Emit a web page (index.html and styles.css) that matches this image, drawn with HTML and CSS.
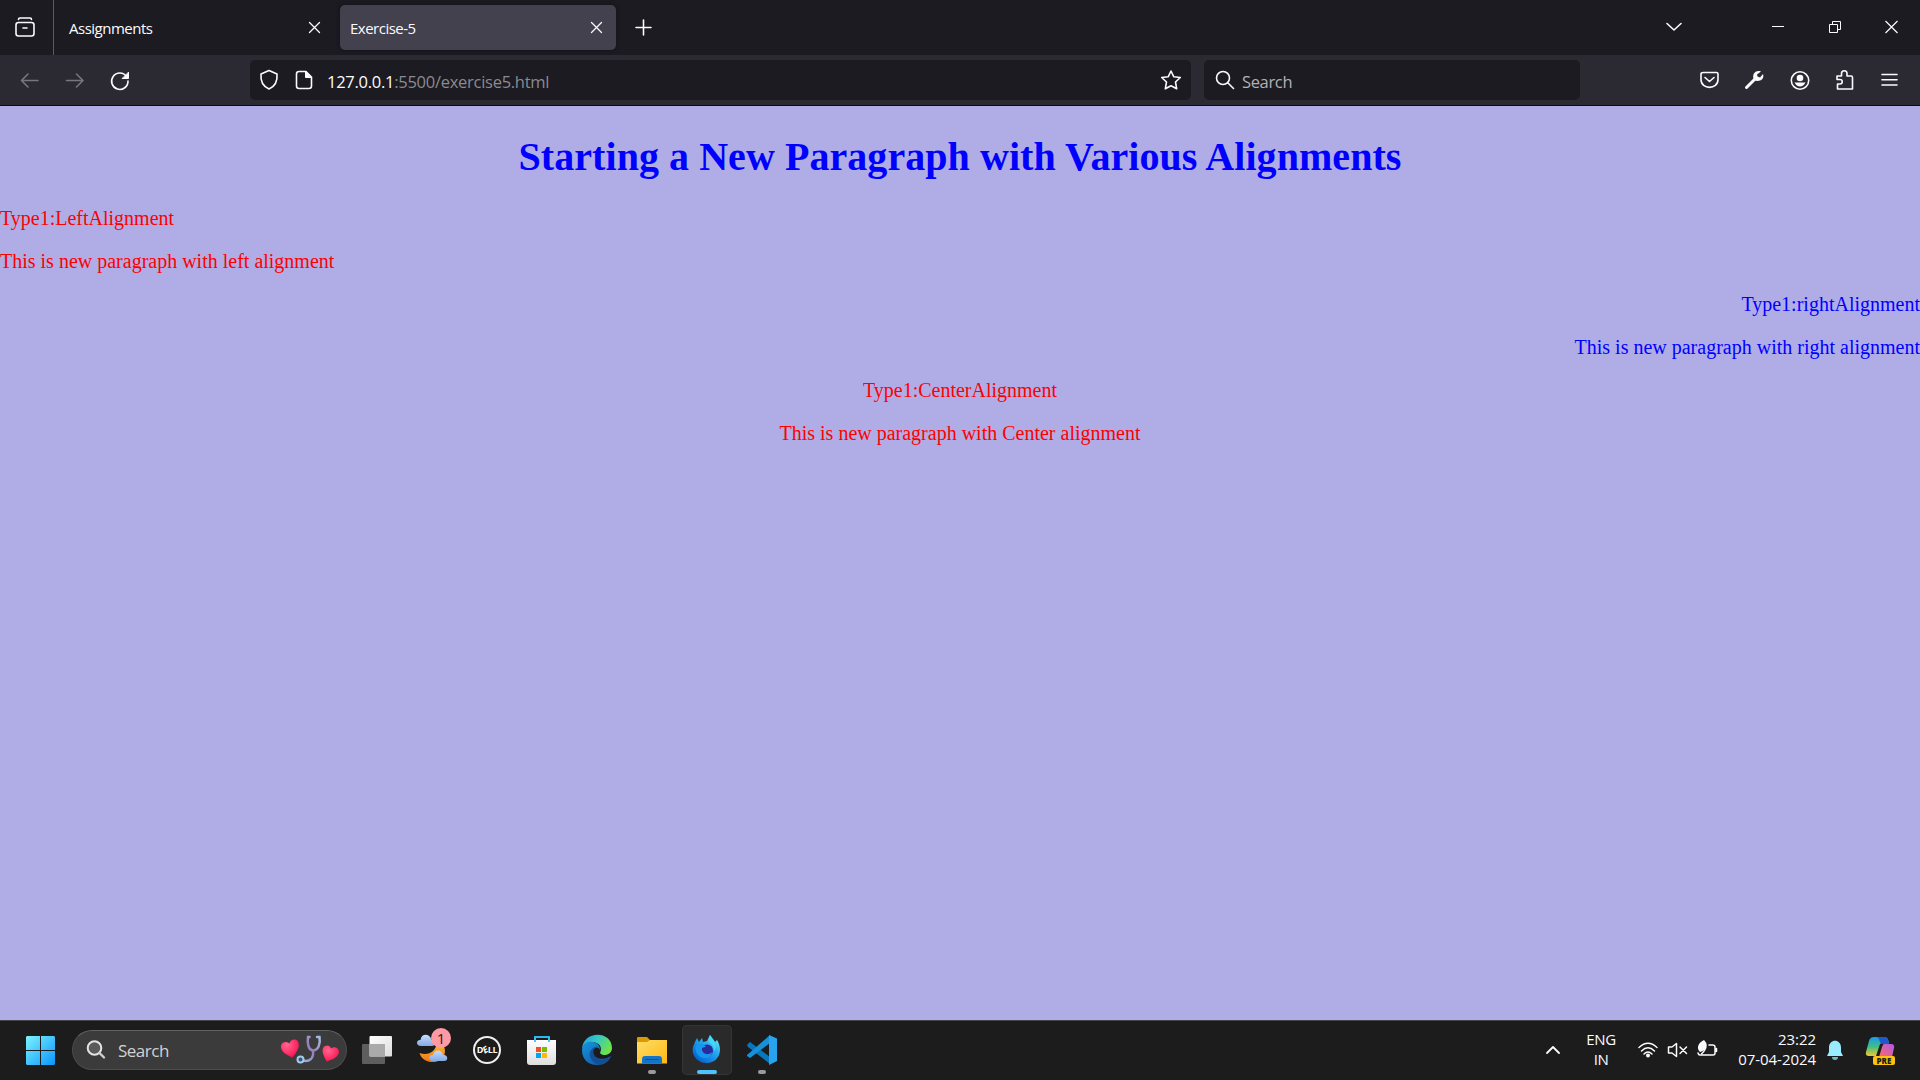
FILE: index.html
```html
<!DOCTYPE html>
<html lang="en">
<head>
<meta charset="utf-8">
<title>Exercise-5</title>
<link rel="stylesheet" href="styles.css">
</head>
<body>
<header class="tabbar">
  <div class="view-button">
    <svg width="24" height="24" viewBox="0 0 24 24" class="line"><path d="M5.500 3.500Q5.500 2 7 2H17Q18.500 2 18.500 3.500"/><rect x="3" y="6.500" width="18" height="13.500" rx="2.500"/><path d="M10 12H14"/></svg>
  </div>
  <div class="tab"><span class="tab-title">Assignments</span><svg class="line thin" width="13" height="13" viewBox="0 0 13 13"><path d="M1.500 1.500L11.500 11.500M11.500 1.500L1.500 11.500"/></svg></div>
  <div class="tab active"><span class="tab-title">Exercise-5</span><svg class="line thin" width="13" height="13" viewBox="0 0 13 13"><path d="M1.500 1.500L11.500 11.500M11.500 1.500L1.500 11.500"/></svg></div>
  <svg class="line new-tab" width="17" height="17" viewBox="0 0 17 17"><path d="M8.500 1V16M1 8.500H16"/></svg>
  <div class="window-controls">
    <svg class="line" width="56" height="55" viewBox="0 0 56 55"><path d="M21 23.500L28 30L35 23.500"/></svg>
    <svg class="line hair" width="57" height="55" viewBox="0 0 57 55"><path d="M23 26.500H35"/></svg>
    <svg class="line hair" width="57" height="55" viewBox="0 0 57 55"><path d="M23.500 24.500H31.500V32.500H23.500ZM26.500 24.500V21.500H34.500V29.500H31.500"/></svg>
    <svg class="line hair" width="57" height="55" viewBox="0 0 57 55"><path d="M22.500 21L34.500 33M34.500 21L22.500 33" stroke-width="1.200"/></svg>
  </div>
</header>
<nav class="toolbar">
  <svg class="line dim" width="45" height="40" viewBox="0 0 45 40"><path d="M38 20.500H21.500M28 14L21.500 20.500L28 27"/></svg>
  <svg class="line dim" width="45" height="40" viewBox="0 0 45 40"><path d="M21.500 20.500H38M31.500 14L38 20.500L31.500 27"/></svg>
  <svg class="line" width="45" height="40" viewBox="0 0 45 40"><path d="M36.500 16.500A8.200 8.200 0 1 0 38 21"/><path class="solid" d="M38.500 12.500V18.500H32.500Z"/></svg>
  <div class="field url">
    <svg class="line" width="38" height="40" viewBox="0 0 38 40"><path d="M19 10.500L27 14Q28 25 19 29Q10 25 11 14Z"/></svg>
    <svg class="line" width="34" height="40" viewBox="0 0 34 40"><path d="M11 11.500H18L23.500 17V26Q23.500 28.500 21 28.500H11Q8.500 28.500 8.500 26V14Q8.500 11.500 11 11.500Z"/><path class="solid" d="M17.500 11.500V17.500H23Z"/></svg>
    <span class="address">127.0.0.1<span class="path">:5500/exercise5.html</span></span>
    <svg class="line star" width="40" height="40" viewBox="0 0 40 40"><path d="M20 11L22.700 16.700L29.300 17.500L24.500 22L25.700 28.800L20 25.700L14.300 28.800L15.500 22L10.700 17.500L17.300 16.700Z"/></svg>
  </div>
  <div class="field search">
    <svg class="line" width="38" height="40" viewBox="0 0 38 40"><circle cx="19" cy="18" r="6.500"/><path d="M24 23L29.500 28.500"/></svg>
    <span class="placeholder">Search</span>
  </div>
  <div class="actions">
    <svg class="line" width="45" height="40" viewBox="0 0 45 40"><path d="M16.500 12.500H29.500Q31 12.500 31 14V19.500C31 30 14 30 14 19.500V14Q14 12.500 16.500 12.500ZM18 17.500L22.500 21.500L27 17.500"/></svg>
    <svg class="line" width="45" height="40" viewBox="0 0 45 40"><path d="M14.500 27.500L23.500 18.500" stroke-width="3"/><path class="fill" d="M29 11.500C23 9.500 19.500 15 22 20C26 22.500 33 20 31 14L28 17.500L25.500 16.500L25 14.500Z"/></svg>
    <svg class="line" width="45" height="40" viewBox="0 0 45 40"><circle cx="23" cy="20.500" r="8.700"/><circle class="fill" cx="23" cy="18" r="3.300"/><path class="fill" d="M17.500 22.500H28.500Q26.500 26.500 23 26.500T17.500 22.500Z"/></svg>
    <svg class="line" width="45" height="40" viewBox="0 0 45 40"><path d="M15 16H19.500V13.500A2.500 2.500 0 0 1 25 13.500V16H29Q30.500 16 30.500 17.500V29H15.500V24H18A2.200 2.200 0 0 0 18 19.500H15V17Z"/></svg>
    <svg class="line" width="45" height="40" viewBox="0 0 45 40"><path d="M15 14.500H30M15 19.700H30M15 25H30"/></svg>
  </div>
</nav>
<main class="page">
  <h1>Starting a New Paragraph with Various Alignments</h1>
  <p class="left">Type1:LeftAlignment</p>
  <p class="left">This is new paragraph with left alignment</p>
  <p class="right">Type1:rightAlignment</p>
  <p class="right">This is new paragraph with right alignment</p>
  <p class="center">Type1:CenterAlignment</p>
  <p class="center">This is new paragraph with Center alignment</p>
</main>
<footer class="taskbar">
  <svg class="start" width="29" height="29" viewBox="0 0 29 29"><defs><linearGradient id="win" x1="0" y1="0" x2="29" y2="29" gradientUnits="userSpaceOnUse"><stop offset="0" stop-color="#7df3ff"/><stop offset="1" stop-color="#0895fb"/></linearGradient></defs><path fill="url(#win)" d="M1 0H14V14H0V1ZM15 0H28L29 1V14H15ZM0 15H14V29H1L0 28ZM15 15H29V28L28 29H15Z"/></svg>
  <div class="pill">
    <svg width="22" height="22" viewBox="0 0 22 22"><circle cx="9.500" cy="9" r="6.800" fill="#5a5a5a" stroke="#e4e4e4" stroke-width="2"/><path d="M14.500 14L19 18.500" stroke="#d0d0d0" stroke-width="2.400" stroke-linecap="round"/></svg>
    <span class="pill-text">Search</span>
    <svg class="doodle" width="62" height="36" viewBox="0 0 62 36"><defs><radialGradient id="heart" cx=".35" cy=".3" r=".8"><stop offset="0" stop-color="#ff668e"/><stop offset=".6" stop-color="#ff2e68"/><stop offset="1" stop-color="#d91850"/></radialGradient><linearGradient id="scope" x1="0" y1="1" x2="1" y2="0"><stop offset="0" stop-color="#8fb5dd"/><stop offset=".5" stop-color="#9b7cba"/><stop offset="1" stop-color="#a6bce0"/></linearGradient></defs>
      <path fill="url(#heart)" d="M13.500 25.500C7 23 1 19 2 13.500C3 9.500 8 9 10.500 11.500C11.500 7 17 6.500 19 9.500C21.500 14.500 18 20 13.500 25.500Z"/>
      <path fill="url(#heart)" d="M47.500 29.500C45 24 42.500 20 44 16C46.500 12.500 51 13 52 16.500C55 14 59.500 15.500 60 19.500C60 25 54 27.500 47.500 29.500Z"/>
      <path fill="none" stroke="url(#scope)" stroke-width="2.500" stroke-linecap="round" d="M30.500 5H29C28 12 29.500 18 34 18.500C39.500 18 41.500 12 40.500 5H38M34 19C35 27 30 30 24 28.500"/><circle cx="21.500" cy="27.500" r="3" fill="#315975" stroke="#a8c9e8" stroke-width="2"/></svg>
  </div>
  <div class="apps">
    <div class="app"><svg width="50" height="50" viewBox="0 0 50 50"><defs><linearGradient id="tv" x1="0" y1="0" x2="1" y2="1"><stop offset="0" stop-color="#fff"/><stop offset="1" stop-color="#ddd"/></linearGradient></defs><rect x="10" y="19" width="23" height="20" rx="1" fill="#5e5e5e"/><rect x="17.500" y="11" width="22.500" height="20.500" rx="1" fill="url(#tv)"/><path d="M17.500 19H33V31.500H17.500Z" fill="#aaa"/></svg></div>
    <div class="app"><svg width="50" height="50" viewBox="0 0 50 50"><defs><linearGradient id="cloud" x2="0" y2="1"><stop stop-color="#c2e0ff"/><stop offset="1" stop-color="#86a9e3"/></linearGradient><linearGradient id="moon" x2="0" y2="1"><stop stop-color="#ffc02c"/><stop offset="1" stop-color="#ed7419"/></linearGradient></defs><path fill="url(#moon)" d="M12.500 28C21 31 29 27 30 17C39 18 40 29 35 34C27 40 15 37 12.500 28Z"/><path fill="url(#cloud)" d="M14 21C8.500 21 9 14.500 13.500 15C14 8 23 8 24.500 15C29 15 29 21 25 21Z"/><path fill="url(#cloud)" d="M26 36C21 36 21 30 26 30C27 24 35 24 36 30C41 29 42 36 37 36Z"/></svg><span class="badge">1</span></div>
    <div class="app"><span class="dell">D<i>E</i>LL</span></div>
    <div class="app"><svg width="50" height="50" viewBox="0 0 50 50"><defs><linearGradient id="bag" x2="0" y2="1"><stop stop-color="#fff"/><stop offset="1" stop-color="#dedede"/></linearGradient></defs><path fill="none" stroke="#2db7ee" stroke-width="1.800" d="M18 17V12H32V17"/><path fill="url(#bag)" d="M10 15H39V37Q39 40 36 40H13Q10 40 10 37Z"/><path d="M18 12V17M32 12V17" stroke="#30c5f5" stroke-width="1.800"/><path fill="#f25022" d="M19 22H24V27H19Z"/><path fill="#7fba00" d="M25 22H30V27H25Z"/><path fill="#00a4ef" d="M19 28H24V33H19Z"/><path fill="#ffb900" d="M25 28H30V33H25Z"/></svg></div>
    <div class="app"><svg width="50" height="50" viewBox="0 0 50 50"><defs><linearGradient id="e1" x1="0" y1="0" x2="1" y2=".45"><stop stop-color="#1f9de0"/><stop offset=".5" stop-color="#36c8c6"/><stop offset="1" stop-color="#6be34b"/></linearGradient><linearGradient id="e2" x1="0" x2=".8" y2="1"><stop stop-color="#1595df"/><stop offset="1" stop-color="#1456a5"/></linearGradient></defs><path fill="url(#e1)" d="M10 25C10 5 40 5 40 23C40 30 31 32 28 28C31 22 27 17 20 17C14 17 11 20 10 25Z"/><path fill="url(#e2)" d="M10 25C11 18 16 16 21 17C26 18 28 21 28 25C26 20 20 23 21 28C22 34 31 36 39 31C37 37 31 40 25 40C16 40 10 34 10 25Z"/><path fill="#134f96" d="M18 27C20 22 24 21 26 22C20 22 20 30 25 33C29 36 35 34 39 31C35 40 28 41 23 38C19 35 17 32 18 27Z"/></svg></div>
    <div class="app"><svg width="50" height="50" viewBox="0 0 50 50"><defs><linearGradient id="folder" x2="1" y2="1"><stop stop-color="#ffdd68"/><stop offset="1" stop-color="#fdb912"/></linearGradient></defs><path fill="#dc9900" d="M10 20V13Q10 12 11 12H20L23 15V20Z"/><path fill="url(#folder)" d="M10 17H20L23 15H40V38.500H10Z"/><path fill="#1474c7" d="M15 38.500V34Q15 31 18 31H32Q35 31 35 34V38.500Z"/><path d="M18 34.500H32" stroke="#09559d"/></svg><span class="running"></span></div>
    <div class="app current"><svg width="50" height="50" viewBox="0 0 50 50"><defs><linearGradient id="fox" x1="1" x2=".2" y2="1"><stop stop-color="#7bf8ff"/><stop offset=".45" stop-color="#26a9ed"/><stop offset="1" stop-color="#005cd0"/></linearGradient></defs><path fill="url(#fox)" d="M13 17L15 13L17 17L20 13L21 17L25 16L28 10C29 14 32 14 33 17L35 15C42 26 36 38 25 38C15 38 9 30 11 22Z"/><circle cx="25" cy="25.500" r="6" fill="#292a9d"/><path fill="#1597ee" d="M14 21L20 18.500L24 21.500L20 23C19 29 27 31 30 27C30 33 22 35 17 31C14 28 13 25 14 21Z"/><path fill="#42d8f8" d="M27 13C25 19 33 18 32 26C35 23 34 17 28 10Z"/></svg><span class="running"></span></div>
    <div class="app"><svg width="50" height="50" viewBox="0 0 50 50"><path fill="#0876bd" d="M10 20L13 17L33 32V39L11 22Z"/><path fill="#1690d8" d="M10 30L33 10V18L13 33L10 31Z"/><path fill="#28a4ef" d="M32 10L40 13.500V36L32 40Z"/></svg><span class="running"></span></div>
  </div>
  <div class="tray">
    <svg class="line tray-line" width="30" height="50" viewBox="0 0 30 50"><path d="M9 28L15 22L21 28" stroke-width="1.800"/></svg>
    <div class="lang"><span>ENG</span><span>IN</span></div>
    <svg class="line tray-line" width="28" height="50" viewBox="0 0 28 50"><path d="M5 22.500Q14 14 23 22.500M7.500 26Q14 19.500 20.500 26M10 29Q14 25 18 29"/><circle class="fill" cx="14" cy="30.500" r="2"/></svg>
    <svg class="line tray-line" width="30" height="50" viewBox="0 0 30 50"><path d="M6.500 22H10L14.500 18.500V31.500L10 28H6.500ZM18 22L24.500 28.500M24.500 22L18 28.500"/></svg>
    <svg class="line tray-line" width="32" height="50" viewBox="0 0 32 50"><path d="M17 20H20.500Q23 20 23 22V28Q23 30 21 30H8Q6.500 30 6 28M24.500 23.500V26.500"/><path class="fill" d="M12 15C16 19 14 26 8 27C4 23 6 18 12 15Z"/><path d="M13.500 18C15.500 22 13.500 25 9.500 29"/></svg>
    <div class="clock"><span>23:22</span><span>07-04-2024</span></div>
    <svg width="40" height="50" viewBox="0 0 40 50"><path fill="#99ebff" d="M11 31L13 27V22.500C13 13.500 25 13.500 25 22.500V27L27 31Z"/><path fill="#65bad0" d="M16 32H22Q22 35 19 35T16 32Z"/></svg>
    <div class="copilot"><svg width="50" height="50" viewBox="0 0 50 50"><defs><linearGradient id="c1" x2="0" y2="1"><stop stop-color="#179bf0"/><stop offset=".5" stop-color="#40bd84"/><stop offset="1" stop-color="#f0c830"/></linearGradient><linearGradient id="c2" x1="1" x2="0" y2="1"><stop stop-color="#ae58ec"/><stop offset="1" stop-color="#ff6b62"/></linearGradient></defs><path fill="url(#c1)" d="M18 12H29Q32 12 33 18H26Q24 18 23 22L20 31H13Q9 31 10 27L13 16Q14 12 18 12Z"/><path fill="#2057cf" d="M21 12H29Q32 12 33 19H27Q24 19 23 14Z"/><path fill="url(#c2)" d="M28 19H35Q39 19 38 23L36 32H23L26 22Q27 19 28 19Z"/></svg><span class="pre">PRE</span></div>
  </div>
</footer>
</body>
</html>
```
FILE: styles.css
```css
* { box-sizing: border-box; }
body { margin: 0; width: 1920px; height: 1080px; overflow: hidden; display: flex; flex-direction: column; background: #b0ade6; font-family: "Open Sans", "Noto Sans", sans-serif; color: #fbfbfe; }
svg { display: block; flex: none; }
span { white-space: nowrap; }
.line { fill: none; stroke: #fbfbfe; stroke-width: 1.6; stroke-linecap: round; stroke-linejoin: round; }
.thin { stroke-width: 1.3; }
.hair { stroke-width: 1; stroke-linecap: butt; stroke-linejoin: miter; }
.dim { stroke: #77767e; }
.fill { fill: #fbfbfe; stroke: none; }
.solid { fill: #fbfbfe; stroke-width: 1; }

.tabbar { display: flex; align-items: center; height: 55px; background: #1c1b22; }
.view-button { display: flex; align-items: center; width: 54px; height: 55px; padding-left: 13px; border-right: 1px solid #5b5a60; }
.tab { display: flex; align-items: center; justify-content: space-between; width: 276px; height: 45px; margin-left: 4px; padding: 0 13px 0 11px; border-radius: 5px; font-size: 15px; }
.tab + .tab { margin-left: 6px; padding-left: 10px; }
.tab.active { background: #42414d; box-shadow: 0 0 4px #111017; }
.tab-title { letter-spacing: -0.5px; }
.new-tab { margin-left: 19px; }
.window-controls { display: flex; margin-left: auto; }
.window-controls svg:first-child { margin-right: 47px; }

.toolbar { display: flex; height: 51px; padding-top: 5px; background: #2b2a33; border-bottom: 1px solid #0c0c0d; }
.field { display: flex; align-items: center; height: 40px; border-radius: 5px; background: #1c1b22; font-size: 16.5px; }
.url { width: 941px; margin-left: 115px; }
.search { width: 376px; margin-left: 13px; }
.address { margin-left: 5px; padding-top: 3px; letter-spacing: -0.27px; }
.path { color: #8b8a90; }
.star { margin-left: auto; }
.placeholder { padding-top: 3px; color: #b2b1b6; letter-spacing: -0.35px; }
.actions { display: flex; margin-left: auto; padding-right: 8px; }

.page { flex: 1; font-family: "Liberation Serif", "Times New Roman", serif; font-size: 20px; line-height: 23px; color: #f00; }
.page h1 { margin: 27px 0; font-size: 40px; line-height: 47px; letter-spacing: 0.06px; text-align: center; color: #00f; }
.page p { margin: 20px 0; }
.page .right { text-align: right; color: #00f; }
.page .center { text-align: center; }

.taskbar { display: flex; align-items: center; height: 60px; padding: 0 0 1px 26px; background: #1c1c1c; border-top: 1px solid #444346; }
.start { margin-right: 17px; }
.pill { display: flex; align-items: center; width: 275px; height: 40px; padding-left: 12px; border: 1px solid #4c4c4c; border-top-color: #626262; border-radius: 20px; background: #3b3b3b; }
.pill-text { margin-left: 11px; padding-top: 1px; font-size: 17px; letter-spacing: -0.5px; color: #d2d2d2; }
.doodle { margin: 0 5px 0 auto; }
.apps { display: flex; gap: 5px; margin-left: 5px; }
.app { position: relative; display: flex; align-items: center; justify-content: center; width: 50px; height: 50px; border-radius: 5px; }
.current { background: #2a2a2a; box-shadow: inset 0 0 0 1px #353535; }
.badge { position: absolute; left: 24px; top: 3px; width: 20px; height: 20px; border-radius: 50%; background: #ff99a4; color: #1c1c1c; font-size: 15px; line-height: 20px; text-align: center; }
.dell { width: 28px; height: 28px; border: 2px solid #efefef; border-radius: 50%; font: bold 9px/24px "Open Sans", sans-serif; letter-spacing: -0.3px; text-align: center; }
.dell i { display: inline-block; transform: rotate(-30deg); }
.running { position: absolute; left: 21px; bottom: 1px; width: 8px; height: 4px; border-radius: 2px; background: #9a9a9a; }
.current .running { left: 15px; width: 20px; background: #4cc2ff; }
.tray { display: flex; align-items: center; margin-left: auto; padding-right: 14px; }
.tray-line { stroke-width: 1.5; }
.lang, .clock { display: flex; flex-direction: column; align-items: center; width: 66px; padding-bottom: 2px; font-size: 15px; line-height: 20px; }
.lang { letter-spacing: -0.4px; }
.clock { width: 92px; align-items: flex-end; letter-spacing: -0.05px; }
.copilot { position: relative; }
.pre { position: absolute; left: 17px; top: 31px; width: 22px; height: 9px; border-radius: 2px; background: #ffc20e; color: #1c1c1c; font-size: 8px; font-weight: 800; line-height: 9px; text-align: center; }
```
